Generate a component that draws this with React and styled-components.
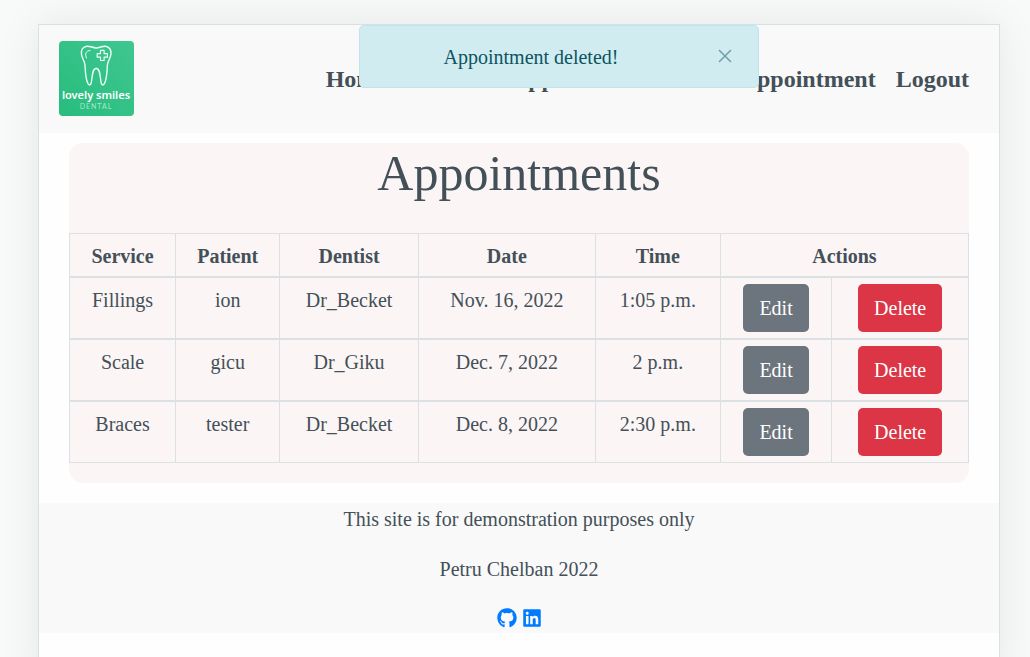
import React, { useState } from "react";
import styled, { createGlobalStyle, css } from "styled-components";
import { FaGithub, FaLinkedin } from "react-icons/fa";

const GlobalStyle = createGlobalStyle`
  *, *::before, *::after { box-sizing: border-box; }
  html { min-height: 100%; background: #f8f9f9; }
  body {
    margin: 0;
    color: #445058;
    font-family: "Liberation Serif", "Times New Roman", serif;
    font-size: 20px;
    line-height: 30px;
  }
`;

const Shell = styled.div`
  position: relative;
  min-height: 100vh;
  margin: 24px 30px 0 38px;
  border: 1px solid #dcdfe0;
  border-bottom: 0;
  background: #fefefe;
  box-shadow: 0 0 40px rgba(0, 0, 0, 0.08);
`;

const Header = styled.header`
  display: flex;
  align-items: center;
  justify-content: space-between;
  padding: 16px 30px 17px 20px;
  background: #f9f9f9;
`;

const HomeLink = styled.a`
  display: block;
  line-height: 0;
`;

const NavList = styled.ul`
  display: flex;
  gap: 20px;
  margin: 0;
  padding: 2px 0 0;
  list-style: none;
`;

const NavLink = styled.a`
  color: inherit;
  font-size: 24px;
  font-weight: 700;
  text-decoration: none;
`;

const AlertArea = styled.div`
  position: absolute;
  top: 0;
  left: 80px;
  right: 0;
  display: flex;
  justify-content: center;
`;

const Alert = styled.div`
  display: flex;
  align-items: flex-start;
  width: 400px;
  padding: 16px 0 15px 10px;
  border: 1px solid #bee5eb;
  border-radius: 5px;
  background: #d1ecf1;
  color: #0c5460;
`;

const AlertText = styled.span`
  flex: 1;
  text-align: center;
`;

const CloseButton = styled.button`
  display: flex;
  align-items: center;
  justify-content: center;
  width: 66px;
  height: 28px;
  padding: 0;
  border: 0;
  background: transparent;
  color: #6f9fa8;
  cursor: pointer;
`;

const Card = styled.main`
  margin: 10px 30px 20px;
  padding-bottom: 20px;
  border-radius: 14px;
  background: #fbf5f5;
`;

const Title = styled.h1`
  margin: 0 0 30px;
  font-size: 50px;
  font-weight: 400;
  line-height: 60px;
  text-align: center;
`;

const Table = styled.table`
  width: 100%;
  border-collapse: collapse;
  table-layout: fixed;
  text-align: center;
`;

const Col = styled.col`
  width: ${(p) => p.$share}%;
`;

const cell = css`
  padding: 7px 6px 5px;
  border: 1px solid #dbe0e3;
  vertical-align: top;
`;

const HeadCell = styled.th`
  ${cell}
`;

const Cell = styled.td`
  ${cell}
  border-top-width: 2px;
`;

const ActionCell = styled(Cell)`
  padding: 6px;
`;

const ActionButton = styled.button`
  display: block;
  margin: 0 auto;
  padding: 9px 16px;
  border: 0;
  border-radius: 5px;
  background: ${(p) => (p.$danger ? "#dc3545" : "#6c757d")};
  color: #fff;
  font: inherit;
  cursor: pointer;
`;

const Footer = styled.footer`
  padding-top: 1px;
  background: #f9f9f9;
  text-align: center;
`;

const FooterText = styled.p`
  margin: 0 0 20px;
`;

const Social = styled.div`
  display: flex;
  align-items: flex-start;
  justify-content: center;
  gap: 5px;
  height: 29px;
  padding-top: 4px;
`;

const SocialLink = styled.a`
  display: flex;
  color: #007bff;

  svg {
    width: auto;
    height: 20px;
  }
`;

function Logo() {
  return (
    <svg width="75" height="75" viewBox="0 0 75 75" role="img" aria-label="Lovely Smiles Dental">
      <defs>
        <linearGradient id="logoFill" x1="0" y1="1" x2="1" y2="0">
          <stop offset="0" stopColor="#26bd7d" />
          <stop offset="1" stopColor="#40c690" />
        </linearGradient>
      </defs>
      <rect width="75" height="75" rx="4" fill="url(#logoFill)" />
      <g fill="none" stroke="#eafff5" strokeLinecap="round" strokeLinejoin="round">
        <path
          strokeWidth="1.4"
          d="M37 7C33.500 6.600 31 5 28 5.200C24 5.600 22 9 22.400 13C22.800 17 25.500 19.500 26 24C26.400 30 26.300 37 28.700 42C29.800 44.600 31.600 44.600 32.200 42C33.600 35 33 27.600 37.200 27.200C41.400 27.600 40.800 35 42.200 42C42.800 44.600 44.600 44.600 45.700 42C48.100 37 48 30 48.400 24C48.900 19.500 51.600 17 52 13C52.400 9 50.400 5.600 46.400 5.200C43.400 5 41 6.600 37 7Z"
        />
        <path strokeWidth="1" d="M31 9.500C27 9.500 25.500 13 27.500 17" />
        <path
          strokeWidth="1.2"
          d="M41.500 9.300h3.600v3.300h3.300v3.600h-3.300v3.300h-3.600v-3.300h-3.300v-3.600h3.300z"
        />
      </g>
      <text
        x="37"
        y="58"
        textAnchor="middle"
        fill="#fff"
        fontFamily="'Noto Sans', sans-serif"
        fontSize="11"
        fontWeight="600"
      >
        lovely smiles
      </text>
      <text
        x="37"
        y="68"
        textAnchor="middle"
        fill="#a9e8cc"
        fontFamily="Lato, sans-serif"
        fontSize="7"
        letterSpacing="1"
      >
        DENTAL
      </text>
    </svg>
  );
}

const links = ["Home", "Services", "Appointments", "Make Appointment", "Logout"];
const columns = [11.8, 11.6, 15.4, 19.7, 13.9, 12.4, 15.2];
const headings = ["Service", "Patient", "Dentist", "Date", "Time"];
const appointments = [
  ["Fillings", "ion", "Dr_Becket", "Nov. 16, 2022", "1:05 p.m."],
  ["Scale", "gicu", "Dr_Giku", "Dec. 7, 2022", "2 p.m."],
  ["Braces", "tester", "Dr_Becket", "Dec. 8, 2022", "2:30 p.m."],
];

export default function App() {
  const [alertOpen, setAlertOpen] = useState(true);

  return (
    <>
      <GlobalStyle />
      <Shell>
        <Header>
          <HomeLink href="#home">
            <Logo />
          </HomeLink>
          <nav>
            <NavList>
              {links.map((label) => (
                <li key={label}>
                  <NavLink href="#">{label}</NavLink>
                </li>
              ))}
            </NavList>
          </nav>
        </Header>

        {alertOpen && (
          <AlertArea>
            <Alert role="alert">
              <AlertText>Appointment deleted!</AlertText>
              <CloseButton type="button" aria-label="Close" onClick={() => setAlertOpen(false)}>
                <svg width="14" height="14" viewBox="0 0 14 14" aria-hidden="true">
                  <path d="M1 1L13 13M13 1L1 13" stroke="currentColor" strokeWidth="1.5" />
                </svg>
              </CloseButton>
            </Alert>
          </AlertArea>
        )}

        <Card>
          <Title>Appointments</Title>
          <Table>
            <colgroup>
              {columns.map((share, i) => (
                <Col key={i} $share={share} />
              ))}
            </colgroup>
            <thead>
              <tr>
                {headings.map((heading) => (
                  <HeadCell key={heading} scope="col">
                    {heading}
                  </HeadCell>
                ))}
                <HeadCell scope="colgroup" colSpan={2}>
                  Actions
                </HeadCell>
              </tr>
            </thead>
            <tbody>
              {appointments.map((row, i) => (
                <tr key={i}>
                  {row.map((value, j) => (
                    <Cell key={j}>{value}</Cell>
                  ))}
                  <ActionCell>
                    <ActionButton type="button">Edit</ActionButton>
                  </ActionCell>
                  <ActionCell>
                    <ActionButton type="button" $danger>
                      Delete
                    </ActionButton>
                  </ActionCell>
                </tr>
              ))}
            </tbody>
          </Table>
        </Card>

        <Footer>
          <FooterText>This site is for demonstration purposes only</FooterText>
          <FooterText>Petru Chelban 2022</FooterText>
          <Social>
            <SocialLink href="#github" aria-label="GitHub">
              <FaGithub />
            </SocialLink>
            <SocialLink href="#linkedin" aria-label="LinkedIn">
              <FaLinkedin />
            </SocialLink>
          </Social>
        </Footer>
      </Shell>
    </>
  );
}
